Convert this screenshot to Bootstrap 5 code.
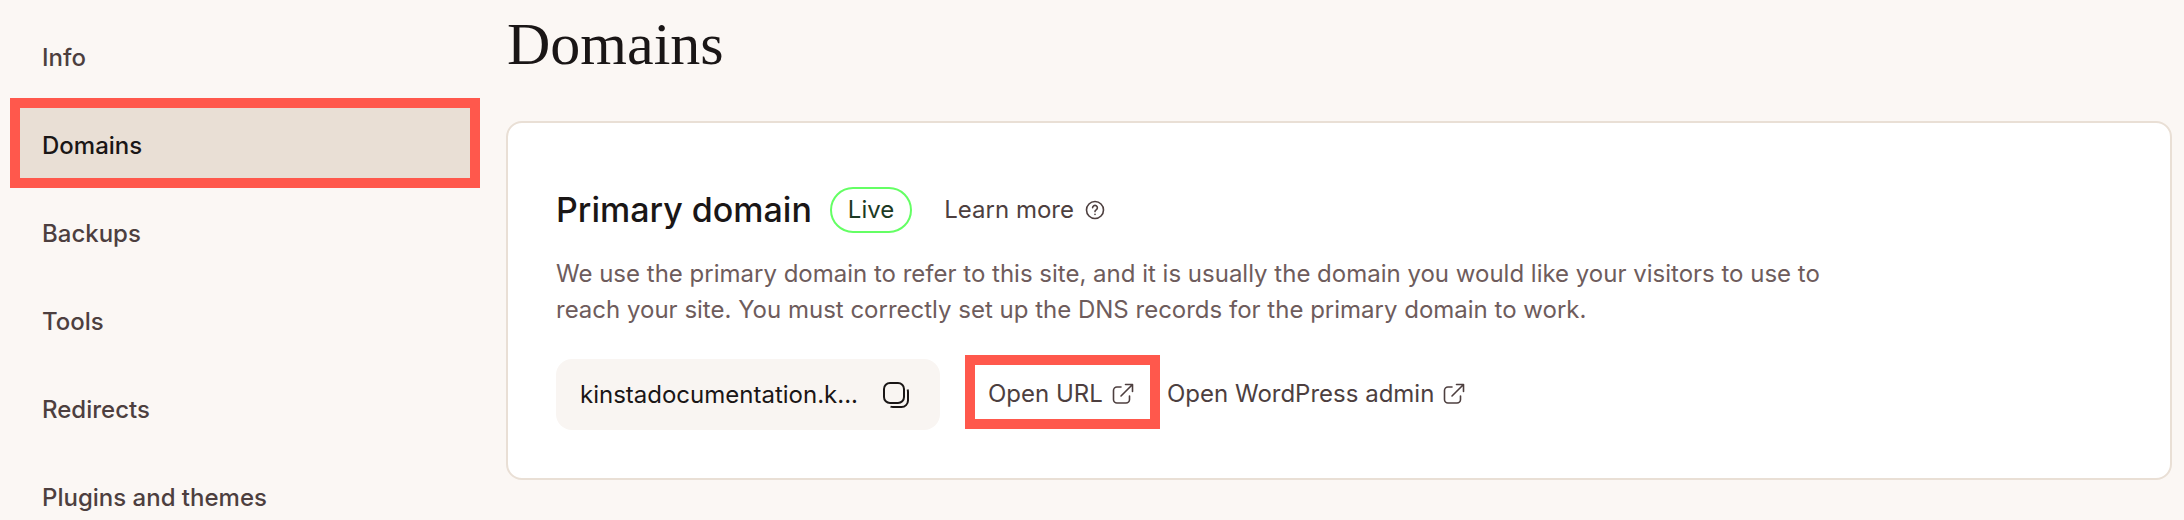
<!DOCTYPE html>
<html lang="en">
<head>
    <meta charset="UTF-8">
    <meta name="viewport" content="width=device-width, initial-scale=1.0">
    <title>Domains</title>
    <link href="https://cdn.jsdelivr.net/npm/bootstrap@5.3.0/dist/css/bootstrap.min.css" rel="stylesheet">
    <style>
        html, body {
            height: 520px;
            overflow: hidden;
        }
        body {
            background: #fbf7f4;
            font-family: Inter, "Liberation Sans", sans-serif;
            color: #4d3f3f;
        }
        .page-shell {
            height: 520px;
            overflow: hidden;
        }
        .side-col {
            width: 450px;
            margin-left: 20px;
            padding-top: 20px;
            flex: none;
            flex-wrap: nowrap;
        }
        .side-col .nav-link {
            height: 70px;
            flex: none;
            margin-bottom: 18px;
            padding: 5px 0 0 22px;
            display: flex;
            align-items: center;
            font-size: 24px;
            font-weight: 500;
            color: #4d3f3f;
        }
        .side-col .nav-link.active {
            background: #e9dfd5;
            color: #1a1616;
        }
        .red-mark {
            outline: 10px solid #ff584c;
        }
        .main-col {
            margin-left: 36px;
            margin-right: 12px;
        }
        .page-title {
            font-family: "Liberation Serif", serif;
            font-size: 60px;
            line-height: 1;
            height: 121px;
            padding: 14px 0 0 1px;
            margin: 0;
            color: #1a1616;
        }
        .domain-card {
            height: 359px;
            padding: 64px 48px 0;
            border: 2px solid #e9dfd5;
            border-radius: 16px;
        }
        .card-heading {
            font-size: 34px;
            font-weight: 500;
            margin: 0;
            color: #1a1616;
        }
        .live-pill {
            height: 46px;
            padding: 0 16px;
            margin-left: 18px;
            border: 2px solid #64ff64;
            border-radius: 23px;
            font-size: 24px;
            color: #1c3a24;
        }
        .learn-link {
            margin-left: 32px;
            gap: 11px;
            font-size: 24px;
            color: #4d3f3f;
            text-decoration: none;
        }
        .card-copy {
            width: 1300px;
            margin: 23px 0 31px;
            font-size: 24px;
            line-height: 36px;
            color: #6e5c5c;
        }
        .copy-box {
            width: 384px;
            height: 71px;
            padding: 0 30px 0 24px;
            border-radius: 16px;
            background: #f9f5f2;
            font-size: 24px;
            color: #1a1616;
        }
        .ext-link {
            gap: 9px;
            font-size: 24px;
            color: #4d3f3f;
            text-decoration: none;
        }
        .url-link {
            margin-left: 35px;
            margin-bottom: 5px;
            width: 175px;
            height: 54px;
            padding: 3px 0 0 13px;
        }
        .admin-link {
            margin-left: 17px;
            margin-bottom: 2px;
        }
    </style>
</head>
<body>
    <div class="page-shell d-flex">
        <nav class="side-col nav flex-column">
            <a class="nav-link" href="#">Info</a>
            <a class="nav-link active red-mark" href="#">Domains</a>
            <a class="nav-link" href="#">Backups</a>
            <a class="nav-link" href="#">Tools</a>
            <a class="nav-link" href="#">Redirects</a>
            <a class="nav-link" href="#">Plugins and themes</a>
        </nav>
        <main class="main-col flex-grow-1">
            <h1 class="page-title">Domains</h1>
            <div class="domain-card card">
                <div class="d-flex align-items-center">
                    <h2 class="card-heading">Primary domain</h2>
                    <span class="live-pill d-inline-flex align-items-center">Live</span>
                    <a class="learn-link d-inline-flex align-items-center" href="#">Learn more
                        <svg width="20" height="20" viewBox="0 0 20 20" fill="none" stroke="#4d3f3f" stroke-width="1.6" stroke-linecap="round">
                            <circle cx="10" cy="10" r="8.5"/>
                            <path d="M7.6 7.8a2.4 2.4 0 1 1 3.6 2.1c-.8.5-1.2.9-1.2 1.7"/>
                            <path d="M10 14.4v.1"/>
                        </svg>
                    </a>
                </div>
                <p class="card-copy">We use the primary domain to refer to this site, and it is usually the domain you would like your visitors to use to reach your site. You must correctly set up the DNS records for the primary domain to work.</p>
                <div class="d-flex align-items-center">
                    <div class="copy-box d-flex align-items-center justify-content-between">
                        <span>kinstadocumentation.k...</span>
                        <svg width="28" height="28" viewBox="0 0 28 28" fill="none" stroke="#1a1616" stroke-width="2">
                            <rect x="2" y="2" width="20" height="20" rx="6"/>
                            <path d="M25.6 8.5c.3.8.4 1.6.4 2.5v8.5a6.5 6.5 0 0 1-6.5 6.5H11c-.9 0-1.700-.1-2.500-.4"/>
                        </svg>
                    </div>
                    <a class="ext-link url-link red-mark d-inline-flex align-items-center" href="#">Open URL
                        <svg width="22" height="22" viewBox="0 0 22 22" fill="none" stroke="#4d3f3f" stroke-width="1.600" stroke-linecap="round" stroke-linejoin="round">
                            <path d="M9 4H5a3.500 3.500 0 0 0-3.500 3.500v9A3.500 3.500 0 0 0 5 20h9a3.500 3.500 0 0 0 3.500-3.500V13"/>
                            <path d="M9 13 20.500 1.500M13.500 1.500h7v7"/>
                        </svg>
                    </a>
                    <a class="ext-link admin-link d-inline-flex align-items-center" href="#">Open WordPress admin
                        <svg width="22" height="22" viewBox="0 0 22 22" fill="none" stroke="#4d3f3f" stroke-width="1.600" stroke-linecap="round" stroke-linejoin="round">
                            <path d="M9 4H5a3.500 3.500 0 0 0-3.500 3.500v9A3.500 3.500 0 0 0 5 20h9a3.500 3.500 0 0 0 3.500-3.500V13"/>
                            <path d="M9 13 20.500 1.500M13.500 1.500h7v7"/>
                        </svg>
                    </a>
                </div>
            </div>
        </main>
    </div>
    <script src="https://cdn.jsdelivr.net/npm/bootstrap@5.3.0/dist/js/bootstrap.bundle.min.js"></script>
</body>
</html>
